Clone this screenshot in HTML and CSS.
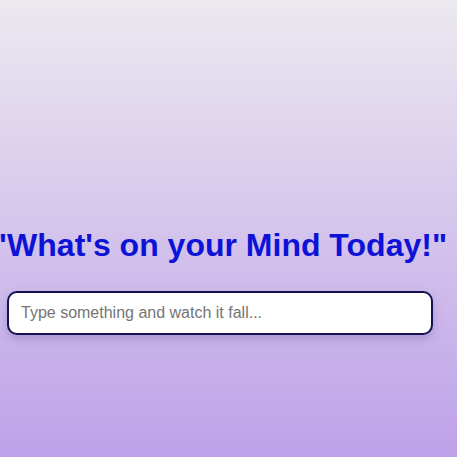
FILE: index.html
```html
<!DOCTYPE html>
<html lang="en">
<head>
<meta charset="utf-8">
<title>What's on your Mind</title>
<link rel="stylesheet" href="styles.css">
</head>
<body>
<main class="page">
  <h1 class="title">"What's on your Mind Today!"</h1>
  <div class="field">
    <input class="thought" type="text" placeholder="Type something and watch it fall...">
  </div>
</main>
</body>
</html>
```
FILE: styles.css
```css
html, body {
  margin: 0;
  padding: 0;
  height: 100%;
}
body {
  background: linear-gradient(to bottom, #ece9ef 0%, #bda1e9 100%);
  font-family: "Liberation Sans", Arial, sans-serif;
  overflow: hidden;
}
.page {
  display: flex;
  flex-direction: column;
  align-items: stretch;
  padding-top: 227px;
}
.title {
  margin: 0 0 0 -18px;
  font-size: 32px;
  font-weight: bold;
  color: #0c12d6;
  text-align: center;
  white-space: nowrap;
  line-height: 36px;
}
.field {
  padding: 28px 24px 0 7px;
}
.thought {
  box-sizing: border-box;
  display: block;
  width: 100%;
  height: 44px;
  border: 2px solid #15104f;
  border-radius: 10px;
  background: #fff;
  padding: 0 12px;
  font-family: "Liberation Sans", Arial, sans-serif;
  font-size: 16px;
  color: #333;
  box-shadow: 0 4px 10px rgba(80, 50, 130, 0.25);
  outline: none;
}
.thought::placeholder {
  color: #757575;
}
```
